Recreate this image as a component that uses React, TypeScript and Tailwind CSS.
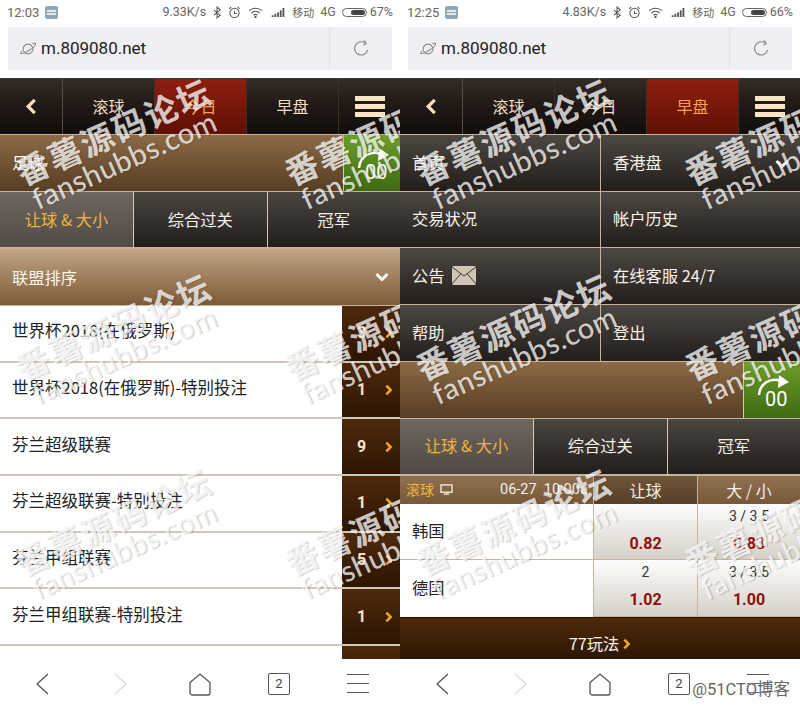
import React from 'react';

const sans = 'font-["Roboto","Noto_Sans_CJK_SC",sans-serif]';
const cjk = 'font-["Noto_Sans_CJK_SC",sans-serif]';

const ChevronRight = ({ className }: { className?: string }) => (
  <svg viewBox="0 0 10 14" className={className} fill="none" stroke="currentColor" strokeWidth="3">
    <path d="M2.5 2l5 5-5 5" />
  </svg>
);

const StatusBar = ({ time, speed, battery, fill }: { time: string; speed: string; battery: string; fill: number }) => (
  <div className={`flex h-[24px] items-center justify-between pl-[7px] pr-[7px] pt-[1px] text-[12.5px] text-[#666] ${sans}`}>
    <div className="flex items-center gap-[6px]">
      <span className="text-[13px]">{time}</span>
      <div className="flex h-[13px] w-[13px] flex-col justify-center gap-[1px] rounded-[2px] bg-[#8fa7b5] px-[2px]">
        <div className="h-[2px] bg-[#dfe8ec]" />
        <div className="h-[2px] bg-[#dfe8ec]" />
      </div>
    </div>
    <div className="flex items-center gap-[5px]">
      <span>{speed}</span>
      <svg viewBox="0 0 10 14" className="ml-[2px] h-[13px] w-[9px]" fill="none" stroke="#555" strokeWidth="1.2">
        <path d="M1 4l7 6-3.5 3V1L8 4l-7 6" />
      </svg>
      <svg viewBox="0 0 14 14" className="ml-[1px] h-[13px] w-[13px]" fill="none" stroke="#555" strokeWidth="1.1">
        <circle cx="7" cy="7.5" r="5" />
        <path d="M7 5v3h2.5M1.5 3L3.5 1M12.5 3l-2-2" />
      </svg>
      <svg viewBox="0 0 16 12" className="ml-[2px] h-[11px] w-[15px]" fill="none" stroke="#555" strokeWidth="1.3">
        <path d="M1 4c4-3.5 10-3.5 14 0M3.5 6.5c2.6-2.2 6.4-2.2 9 0M6 9c1.2-1 2.8-1 4 0" />
        <circle cx="8" cy="11" r="0.6" fill="#555" />
      </svg>
      <svg viewBox="0 0 14 10" className="ml-[3px] h-[9px] w-[14px]" fill="#555">
        <path d="M0 8h2v2H0zM3 6.500h2V10H3zM6 5h2v5H6zM9 2.500h2V10H9zM12 0h2v10h-2z" />
      </svg>
      <span className={`ml-[2px] text-[11px] ${cjk}`}>移动</span>
      <span className="ml-[1px]">4G</span>
      <div className="ml-[1px] flex h-[9px] w-[25px] rounded-full border border-[#666] p-[1px]">
        <div className="ml-auto h-full rounded-full bg-[#444]" style={{ width: `${fill}%` }} />
      </div>
      <span className="-ml-[2px]">{battery}</span>
    </div>
  </div>
);

const UrlBar = () => (
  <div className="mx-[8px] mt-[3px] flex h-[43px] items-center rounded-[2px] bg-[#f0eff4]">
    <div className="flex flex-1 items-center gap-[5px] pl-[12px]">
      <svg viewBox="0 0 18 18" className="h-[16px] w-[16px]" fill="none" stroke="#888" strokeWidth="1.2">
        <circle cx="9" cy="9" r="5.500" />
        <path d="M14 3c2-.6 3.200-.4 3.400.2.300 1.500-3 4.800-6.900 7.200C6.500 12.800 2 14.600 1 13.800c-.4-.4 0-1.300 1-2.400" />
      </svg>
      <span className={`text-[17px] text-[#222] ${sans}`}>m.809080.net</span>
    </div>
    <div className="flex h-full w-[63px] items-center justify-center border-l border-[#e2e1e6]">
      <svg viewBox="0 0 18 18" className="h-[17px] w-[17px]" fill="none" stroke="#888" strokeWidth="1.2">
        <path d="M15.500 10.500A7 7 0 1 1 12.500 3" />
        <path d="M11.500 0.500l2.500 3-3 2" />
      </svg>
    </div>
  </div>
);

const TopNav = ({ active }: { active: number }) => {
  const tabs = ['滚球', '今日', '早盘'];
  return (
    <div className={`flex h-[57px] border-y border-[#c6b49e] border-t-[#3a3a3a] bg-gradient-to-b from-[#332b25] via-[#1f1814] to-[#120d0a] text-[16px] text-[#f0dfc4] ${cjk}`}>
      <div className="flex w-[63px] items-center justify-center border-r border-[#5a4d42]">
        <svg viewBox="0 0 14 18" className="h-[17px] w-[14px]" fill="none" stroke="#f6dfbd" strokeWidth="3.500">
          <path d="M11 2L4 9l7 7" />
        </svg>
      </div>
      {tabs.map((tab, i) => (
        <div
          key={tab}
          className={
            i === active
              ? 'flex w-[92px] items-center justify-center border-r border-[#3a3028] bg-gradient-to-b from-[#8f1f10] to-[#5f1005] pb-[2px] text-[#f7a052]'
              : 'flex w-[92px] items-center justify-center border-r border-[#3a3028] pb-[2px]'
          }
        >
          {tab}
        </div>
      ))}
      <div className="flex flex-1 flex-col items-center justify-center gap-[3px]">
        <div className="h-[5px] w-[30px] bg-[#f8e4c6]" />
        <div className="h-[5px] w-[30px] bg-[#f8e4c6]" />
        <div className="h-[5px] w-[30px] bg-[#f8e4c6]" />
      </div>
    </div>
  );
};

const SportBar = ({ label }: { label?: string }) => (
  <div className={`flex h-[57px] border-b border-[#c6b49e] bg-gradient-to-b from-[#8c6a45] to-[#573e24] text-[16px] text-white ${cjk}`}>
    <div className="flex flex-1 items-center pb-[2px] pl-[12px]">{label}</div>
    <div className="relative w-[57px] border-l border-[#d8c9b4] bg-gradient-to-b from-[#6f9e2a] to-[#3f6a12]">
      <svg viewBox="0 0 34 22" className="absolute left-[13px] top-[13px] h-[22px] w-[34px]" fill="none" stroke="#fff" strokeWidth="2.500">
        <path d="M2 20C3 8 14 2 24 6" />
        <path d="M22 0l10 7-11 6z" fill="#fff" stroke="none" />
      </svg>
      <span className={`absolute left-[21px] top-[26px] text-[20px] leading-[22px] ${sans}`}>00</span>
    </div>
  </div>
);

const SubTabs = () => {
  const tabs = ['让球 & 大小', '综合过关', '冠军'];
  return (
    <div className={`flex h-[57px] border-b-2 border-[#c6b49e] text-[16.3px] ${cjk}`}>
      {tabs.map((tab, i) => (
        <div
          key={tab}
          className={
            i === 0
              ? 'flex w-[134px] items-center justify-center border-r border-[#d8c9b4] bg-gradient-to-b from-[#6e665f] to-[#524b45] pb-[1px] text-[#efb341]'
              : 'flex flex-1 items-center justify-center border-r border-[#d8c9b4] bg-gradient-to-b from-[#4c4641] to-[#231e1b] pb-[1px] text-[#f4f0ea] last:border-r-0'
          }
        >
          {tab}
        </div>
      ))}
    </div>
  );
};

const leagues = [
  { name: '世界杯2018(在俄罗斯)', count: '3' },
  { name: '世界杯2018(在俄罗斯)-特别投注', count: '1' },
  { name: '芬兰超级联赛', count: '9' },
  { name: '芬兰超级联赛-特别投注', count: '1' },
  { name: '芬兰甲组联赛', count: '5' },
  { name: '芬兰甲组联赛-特别投注', count: '1' },
  { name: '', count: '' },
];

const LeftContent = () => (
  <>
    <SportBar label="足球" />
    <SubTabs />
    <div className={`flex h-[57px] items-center justify-between border-b border-[#c6b49e] bg-gradient-to-b from-[#c2a684] to-[#7d5b38] pl-[12px] pr-[11px] text-[16.3px] text-[#fdf6ea] ${cjk}`}>
      <span>联盟排序</span>
      <svg viewBox="0 0 14 10" className="h-[10px] w-[14px]" fill="none" stroke="#fff" strokeWidth="3">
        <path d="M1.500 2L7 7.500 12.500 2" />
      </svg>
    </div>
    {leagues.map((league, i) => (
      <div key={i} className={`flex h-[56.670px] border-b-2 border-[#d1c7b9] bg-white text-[16.5px] text-[#222] ${cjk}`}>
        <div className="flex flex-1 items-center pb-[5px] pl-[12px]">{league.name}</div>
        <div className="flex w-[58px] items-center justify-center gap-[18px] bg-gradient-to-b from-[#4e2a0c] to-[#2d1503] pl-[8px] font-bold text-[#f6e6cd]">
          {league.count && <span className={`text-[16px] ${sans}`}>{league.count}</span>}
          {league.count && <ChevronRight className="h-[12px] w-[9px] text-[#efa520]" />}
        </div>
      </div>
    ))}
  </>
);

const menuRows = [
  ['首页', '香港盘'],
  ['交易状况', '帐户历史'],
  ['公告', '在线客服 24/7'],
  ['帮助', '登出'],
];

const Envelope = () => (
  <svg viewBox="0 0 24 19" className="ml-[7px] h-[19px] w-[24px]">
    <rect width="24" height="19" rx="1.500" fill="#cfc4b5" />
    <path d="M0 1l12 9L24 1M0 18l8.500-10M24 18L15.500 8" fill="none" stroke="#3a332e" strokeWidth="1" />
  </svg>
);

const RightContent = () => (
  <>
    {menuRows.map((row, i) => (
      <div key={i} className={`flex h-[56.670px] border-b border-[#c6b49e] text-[16.3px] text-[#f7f3ec] ${cjk}`}>
        {row.map((item, j) => (
          <div
            key={item}
            className={
              j === 0
                ? 'flex w-[201px] items-center border-r border-[#c6b49e] bg-gradient-to-b from-[#4e4843] to-[#231e1b] pb-[2px] pl-[12px]'
                : 'relative flex flex-1 items-center bg-gradient-to-b from-[#4e4843] to-[#231e1b] pb-[2px] pl-[12px]'
            }
          >
            {item}
            {item === '公告' && <Envelope />}
            {item === '香港盘' && (
              <svg viewBox="0 0 14 10" className="absolute right-[11px] top-[24px] h-[10px] w-[14px]" fill="none" stroke="#fff" strokeWidth="3">
                <path d="M1.500 2L7 7.500 12.500 2" />
              </svg>
            )}
          </div>
        ))}
      </div>
    ))}
    <SportBar />
    <SubTabs />
    <div className={`flex h-[28px] text-[16px] text-[#f6efe4] ${cjk}`}>
      <div className="flex w-[193px] items-center bg-gradient-to-b from-[#8f7050] to-[#775838] pl-[6px]">
        <span className="text-[14px] text-[#efb341]">滚球</span>
        <svg viewBox="0 0 14 12" className="ml-[6px] h-[11px] w-[13px]" fill="none" stroke="#f1e9dc" strokeWidth="1.500">
          <rect x="1" y="1" width="12" height="8" />
          <path d="M4 11h6" />
        </svg>
        <span className={`ml-[47px] whitespace-nowrap text-[14.5px] ${sans}`}>06-27&nbsp;&nbsp;10:00a</span>
      </div>
      <div className="flex w-[104px] items-center justify-center border-l border-[#c6b49e] bg-gradient-to-b from-[#705538] to-[#55402a]">让球</div>
      <div className="flex flex-1 items-center justify-center border-l border-[#c6b49e] bg-gradient-to-b from-[#8f7050] to-[#775838]">大 / 小</div>
    </div>
    <div className="flex">
      <div className={`w-[193px] bg-white text-[16.3px] text-[#222] ${cjk}`}>
        <div className="flex h-[56.500px] items-center border-b border-[#c6b49e] pb-[2px] pl-[12px]">韩国</div>
        <div className="flex h-[56.500px] items-center pb-[2px] pl-[12px]">德国</div>
      </div>
      <div className="w-[104px]">
        <OddsCell line="" price="0.82" />
        <OddsCell line="2" price="1.02" />
      </div>
      <div className="flex-1">
        <OddsCell line="3 / 3.5" price="0.83" />
        <OddsCell line="3 / 3.5" price="1.00" />
      </div>
    </div>
    <div className={`flex h-[43px] items-center justify-center gap-[3px] border-t border-[#2a1405] bg-gradient-to-b from-[#4f2a0b] to-[#2c1604] pt-[10px] text-[16.3px] text-[#fbf3e6] ${cjk}`}>
      <span>77玩法</span>
      <ChevronRight className="h-[12px] w-[9px] text-[#efa520]" />
    </div>
  </>
);

const OddsCell = ({ line, price }: { line: string; price: string }) => (
  <div className={`flex h-[56.500px] flex-col items-center border-b border-l border-[#c6b49e] bg-gradient-to-b from-[#fdfdfc] to-[#d6d1c9] ${sans}`}>
    <span className="h-[24px] text-[14px] leading-[24px] text-[#333]">{line}</span>
    <span className="mt-[4px] text-[16px] font-bold leading-[24px] text-[#8e1010]">{price}</span>
  </div>
);

const BottomBar = () => (
  <div className="absolute bottom-0 left-0 right-0 flex h-[52px] items-start bg-white pt-[14px]">
    <svg viewBox="0 0 14 22" className="ml-[35px] h-[22px] w-[14px]" fill="none" stroke="#555" strokeWidth="1.300">
      <path d="M13 1L2 11l11 10" />
    </svg>
    <svg viewBox="0 0 14 22" className="ml-[65px] h-[22px] w-[14px]" fill="none" stroke="#ddd" strokeWidth="1.300">
      <path d="M1 1l11 10L1 21" />
    </svg>
    <svg viewBox="0 0 22 23" className="ml-[61px] h-[23px] w-[22px]" fill="none" stroke="#555" strokeWidth="1.300">
      <path d="M1 9.500L11 1l10 8.500V20a2 2 0 0 1-2 2H3a2 2 0 0 1-2-2z" />
    </svg>
    <div className={`ml-[57px] flex h-[22px] w-[22px] items-center justify-center rounded-[2px] border border-[#555] text-[13px] text-[#444] ${sans}`}>2</div>
    <div className="ml-[57px] flex w-[22px] flex-col gap-[8px] pt-[1px]">
      <div className="h-px bg-[#555]" />
      <div className="h-px bg-[#555]" />
      <div className="h-px bg-[#555]" />
    </div>
  </div>
);

const Watermark = ({ className }: { className: string }) => (
  <div className={`pointer-events-none absolute origin-top-left -rotate-[24deg] text-white/75 [text-shadow:1px_1px_1px_rgba(0,0,0,0.2)] ${className}`}>
    <div className={`whitespace-nowrap text-[33px] font-bold leading-[36px] tracking-[2px] ${cjk}`}>番薯源码论坛</div>
    <div className={`-mt-[4px] whitespace-nowrap pl-[4px] text-[29px] font-medium leading-[34px] tracking-[0.5px] font-["Lato",sans-serif]`}>fanshubbs.com</div>
  </div>
);

const marks = [
  'top-[157px] left-[10px]',
  'top-[157px] left-[279px]',
  'top-[352px] left-[10px]',
  'top-[352px] left-[279px]',
  'top-[547px] left-[10px]',
  'top-[547px] left-[279px]',
];

const Phone = ({ right }: { right?: boolean }) => (
  <div className="relative h-[711px] w-[400px] overflow-hidden bg-white">
    <StatusBar
      time={right ? '12:25' : '12:03'}
      speed={right ? '4.83K/s' : '9.33K/s'}
      battery={right ? '66%' : '67%'}
      fill={right ? 66 : 67}
    />
    <UrlBar />
    <div className="mt-[8px]">
      <TopNav active={right ? 2 : 1} />
      {right ? <RightContent /> : <LeftContent />}
    </div>
    {marks.map((m) => (
      <Watermark key={m} className={m} />
    ))}
    <BottomBar />
  </div>
);

export default function App() {
  return (
    <div className="relative flex h-[711px] w-[800px] overflow-hidden bg-white">
      <Phone />
      <Phone right />
      <div className={`absolute bottom-[8px] right-[10px] text-[16.5px] text-[#666] [text-shadow:0_0_2px_#fff] ${sans}`}>@51CTO博客</div>
    </div>
  );
}
